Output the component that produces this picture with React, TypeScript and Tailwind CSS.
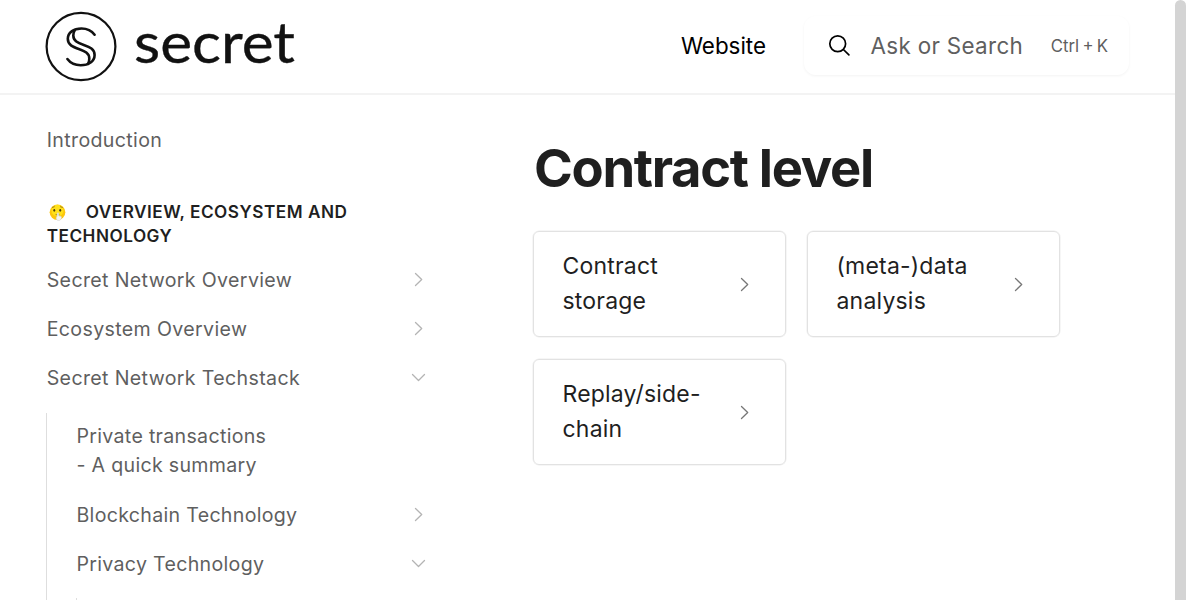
import React from "react";

function Chevron({ open = false, className = "" }: { open?: boolean; className?: string }) {
  return (
    <svg viewBox="0 0 16 16" className={`size-4 shrink-0 ${className}`} fill="none" stroke="currentColor" strokeWidth="1.3" strokeLinecap="round" strokeLinejoin="round">
      <path d={open ? "M1.500 4.500 7.500 10.500l6-6" : "M4.500 1.500 10.700 7.500l-6.200 6"} />
    </svg>
  );
}

function Logo() {
  return (
    <svg width="260" height="80" viewBox="40 6 260 80" fill="none" stroke="#111" strokeLinecap="round">
      <ellipse cx="81" cy="46.500" rx="34.400" ry="33.600" strokeWidth="2.200" />
      <g strokeWidth="2.600">
        <path d="M94.600 34.700C91.500 30.500 86.800 28.500 81.500 28.500 73.500 28.500 67.800 32.700 67.800 38.800c0 6.200 5 8 11 10.200 6 2.100 10.500 4.200 10.500 9.500 0 2-.3 4-1.300 5.400" />
        <path d="M67.400 59.100c3.100 4.200 7.900 6.200 13.300 6.200 8 0 13.900-4 13.900-10.300 0-6-4.800-7.900-10.800-10-6-2.100-10.500-4.200-10.500-9.500 0-2 .4-3.900 1.500-5.300" />
      </g>
      <text x="134" y="62.500" textLength="161" lengthAdjust="spacingAndGlyphs" fill="#111" strokeWidth="0.350" className="font-['Lato',sans-serif] text-[56px]">
        secret
      </text>
    </svg>
  );
}

function Shushing() {
  return (
    <svg viewBox="0 0 18 18" className="mr-[20px] ml-[2px] inline-block size-[17px] align-[-3px]">
      <circle cx="9" cy="8.700" r="8.300" fill="#fdc60d" />
      <circle cx="9" cy="7" r="6.300" fill="#ffe11a" />
      <ellipse cx="5.600" cy="6.700" rx="1" ry="1.400" fill="#4b3b10" />
      <ellipse cx="11.900" cy="6.700" rx="1" ry="1.400" fill="#4b3b10" />
      <path d="M3.300 3.700 6 2.800M11.800 2.800l2.700.9" stroke="#8b6910" strokeWidth=".9" />
      <path d="M7 11.300h4" stroke="#7a5b12" strokeWidth=".8" />
      <path d="M9.400 9.300c.8 0 1 .5 1 1.300v2l2 .4c1 .3 1.100 1.300.6 2.300-.5 1.300-1.400 2.200-2.700 2.200-1.800 0-2.900-1.200-2.700-2.800.1-.9.500-1.300 1-1.700v-2.400c0-.8.200-1.300.8-1.300Z" fill="#f4f4f4" stroke="#c7c7c7" strokeWidth=".5" />
    </svg>
  );
}

function NavItem({ label, open }: { label: string; open?: boolean }) {
  return (
    <a className="flex h-[49px] items-center justify-between">
      <span>{label}</span>
      <Chevron open={open} className="mb-px text-[#b4b4b4]" />
    </a>
  );
}

function Card({ children }: { children: React.ReactNode }) {
  return (
    <a className="flex h-[106px] items-center justify-between rounded-[6px] border border-[#e2e2e2] pr-[32px] pl-[28.500px] text-[23px] leading-[35px] tracking-[0.200px] text-[#1f1f1f] shadow-[0_0_0_0.5px_#eeeeee]">
      <span>{children}</span>
      <Chevron className="mt-px text-[#777]" />
    </a>
  );
}

export default function App() {
  return (
    <div className="flex h-[600px] overflow-hidden bg-white font-['Inter',sans-serif]">
      <div className="flex min-w-0 flex-1 flex-col">
        <header className="flex h-[95px] shrink-0 items-center border-b-2 border-[#f3f3f3] pr-[46px] pb-[2px] pl-10">
          <Logo />
          <a className="ml-auto text-[22.400px] text-black">Website</a>
          <div className="ml-[38px] flex h-[59px] w-[325px] items-center rounded-[12px] pr-[21px] pl-6 shadow-[0_1px_3px_rgba(0,0,0,0.05)]">
            <svg viewBox="0 0 24 24" className="size-6 shrink-0" fill="none" stroke="black" strokeWidth="1.700" strokeLinecap="round">
              <circle cx="9.700" cy="9.700" r="7.900" />
              <path d="m15.400 15.500 5.500 5.300" />
            </svg>
            <span className="ml-[18.500px] text-[22.400px] tracking-[0.33px] text-[#5f5f5f]">Ask or Search</span>
            <span className="mt-[3px] ml-auto text-[16.800px] tracking-[0px] [word-spacing:-1.500px] text-[#5f5f5f]">Ctrl + K</span>
          </div>
        </header>
        <div className="flex min-h-0 flex-1">
          <nav className="w-[427px] shrink-0 pt-[21px] pl-[46px] text-[19.600px] leading-[29px] tracking-[0.350px] text-[#5f5f5f]">
            <a className="flex h-[49px] items-center pl-[0.700px]">Introduction</a>
            <h2 className="mt-[35px] mb-[8px] pl-[0.700px] text-[17.200px] leading-6 font-semibold tracking-[0.500px] text-[#1f1f1f]">
              <Shushing />
              OVERVIEW, ECOSYSTEM AND TECHNOLOGY
            </h2>
            <div className="pl-[0.700px]">
              <NavItem label="Secret Network Overview" />
              <NavItem label="Ecosystem Overview" />
              <NavItem label="Secret Network Techstack" open />
            </div>
            <div className="mt-[10px] border-l border-[#dedede] pl-[29.500px] tracking-[0.300px]">
              <a className="flex h-[76px] items-center">
                <span>Private transactions<br />- A quick summary</span>
              </a>
              <div className="mt-[2px]">
                <NavItem label="Blockchain Technology" />
                <NavItem label="Privacy Technology" open />
              </div>
              <div className="mt-[9px] -ml-px h-10 border-l border-[#dedede]" />
            </div>
          </nav>
          <main className="ml-[106px] w-[527px] pt-[38px]">
            <h1 className="pl-px text-[52.500px] leading-[70px] font-bold tracking-[-1.310px] text-[#1f1f1f]">Contract level</h1>
            <div className="mt-7 grid grid-cols-2 gap-x-[21px] gap-y-[22px]">
              <Card>Contract<br />storage</Card>
              <Card>(meta-)data<br />analysis</Card>
              <Card>Replay/side-<br />chain</Card>
            </div>
          </main>
        </div>
      </div>
      <div className="w-[11px] shrink-0 rounded-t-[6px] bg-[#d4d4d4]" />
    </div>
  );
}
